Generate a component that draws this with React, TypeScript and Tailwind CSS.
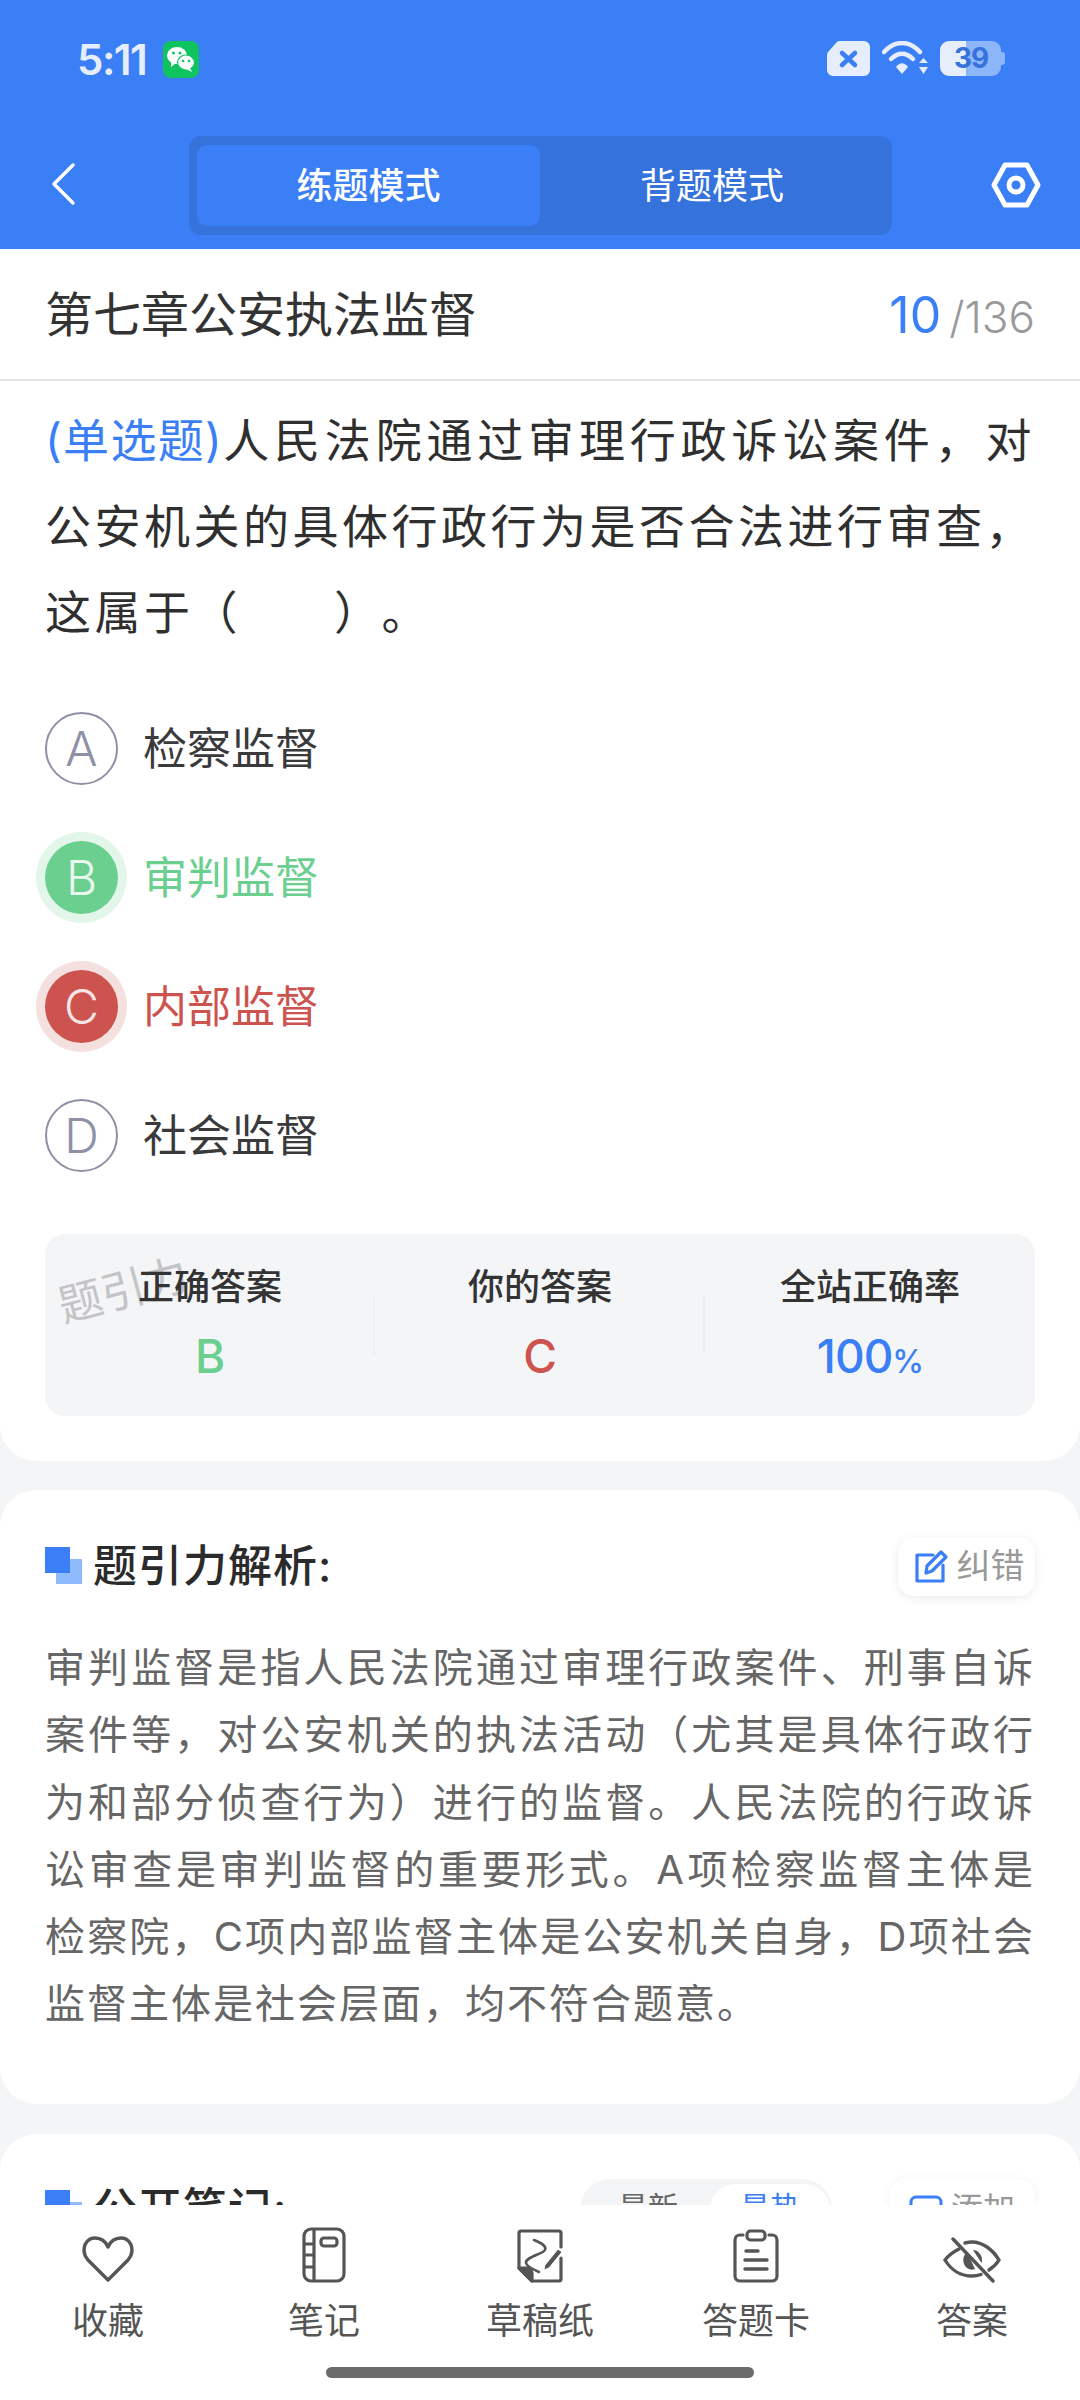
const opciones = [
  { letra: 'A', texto: '检察监督', estado: 'normal' },
  { letra: 'B', texto: '审判监督', estado: 'correcta' },
  { letra: 'C', texto: '内部监督', estado: 'erronea' },
  { letra: 'D', texto: '社会监督', estado: 'normal' },
];

function Opcion({ letra, texto, estado }: { letra: string; texto: string; estado: string }) {
  let circulo = 'border-2 border-[#8e90a6] text-[#8e90a6]';
  let color = 'text-[#3a3a3c]';
  if (estado === 'correcta') {
    circulo = 'bg-[#6bcf8f] text-[#e8f8ee] ring-[9px] ring-[#e2f6ea]';
    color = 'text-[#6bcf8f]';
  }
  if (estado === 'erronea') {
    circulo = 'bg-[#cd534f] text-[#f8e4e4] ring-[9px] ring-[#f5e0e0]';
    color = 'text-[#cd534f]';
  }
  return (
    <div className="flex h-[129px] items-center">
      <div className={`flex h-[73px] w-[73px] items-center justify-center rounded-full text-[48px] font-light ${circulo}`}>
        {letra}
      </div>
      <span className={`ml-[25px] text-[44px] leading-none ${color}`}>{texto}</span>
    </div>
  );
}

function Encabezado({ titulo }: { titulo: string }) {
  return (
    <div className="flex items-center">
      <div className="relative h-[38px] w-[37px]">
        <div className="absolute left-[11px] top-[12px] h-[25px] w-[26px] bg-[#8fbafb]" />
        <div className="absolute left-0 top-0 h-[26px] w-[25px] bg-[#3b7ff6]" />
      </div>
      <span className="ml-[11px] text-[44px] font-medium leading-none tracking-[1px] text-[#2b2b2b]">{titulo}</span>
    </div>
  );
}

function IconoCorazon() {
  return (
    <svg width="54" height="48" viewBox="0 0 54 48" fill="none" stroke="#555" strokeWidth="3.4" strokeLinejoin="round">
      <path d="M27 12 C24 5 18 3 14 3 C7 3 3 9 3 15 C3 19 4.500 22 7 25 L27 45 L47 25 C49.500 22 51 19 51 15 C51 9 47 3 40 3 C36 3 30 5 27 12 Z" />
    </svg>
  );
}

function IconoCuaderno() {
  return (
    <svg width="44" height="56" viewBox="0 0 44 56" fill="none" stroke="#555" strokeWidth="3.2">
      <rect x="2" y="2" width="40" height="52" rx="7" />
      <path d="M12 2 V54 M2 17 H12 M2 28 H12 M2 40 H12" />
      <rect x="19" y="11" width="16" height="8" rx="3" />
    </svg>
  );
}

function IconoBorrador() {
  return (
    <svg width="46" height="54" viewBox="0 0 46 54" fill="none" stroke="#555" strokeWidth="3.2" strokeLinejoin="round" strokeLinecap="round">
      <path d="M44 18 V4 a2 2 0 0 0 -2 -2 H4 a2 2 0 0 0 -2 2 V39 L15 52 H42 a2 2 0 0 0 2 -2 V29" />
      <path d="M2 39 H10 a5 5 0 0 1 5 5 V52 Z" fill="#555" />
      <path d="M17 11 C24 14 30 17 28 21 C26 25 8 28 9 34 C10 38 16 40 22 43" strokeWidth="2.6" />
      <path d="M28 36 L41 20 L45 23 L32 39 L27 41 Z" fill="#555" stroke="#fff" strokeWidth="1" />
    </svg>
  );
}

function IconoTarjeta() {
  return (
    <svg width="46" height="54" viewBox="0 0 46 54" fill="none" stroke="#555" strokeWidth="3.2" strokeLinecap="round">
      <path d="M10 6 H7 a5 5 0 0 0 -5 5 V47 a5 5 0 0 0 5 5 H39 a5 5 0 0 0 5 -5 V11 a5 5 0 0 0 -5 -5 H36" />
      <rect x="14" y="2" width="18" height="9" rx="3.500" />
      <path d="M13 22 H25 M12 31 H34 M12 40 H34" strokeWidth="3.400" />
    </svg>
  );
}

function IconoOjo() {
  return (
    <svg width="58" height="46" viewBox="0 0 58 46" fill="none" stroke="#555" strokeWidth="3.4" strokeLinecap="round">
      <path d="M16 12 C10 15 5 19 2 23 C8 33 18 39 29 39 C32 39 35 38.500 38 37.500" />
      <path d="M22 6 C24 5.500 27 5 29 5 C40 5 50 13 56 23 C53 28 49 31 46 33" />
      <path d="M24 15 C19 19 19 27 24 31 C27 33 29 33 32 32 Z" fill="#555" stroke="none" />
      <path d="M30 13 C35 13 39 18 39 23 C39 24 39 25 38.500 26 Z" fill="#555" stroke="none" />
      <path d="M10 2 L50 44" />
    </svg>
  );
}

const barra = [
  { etiqueta: '收藏', icono: <IconoCorazon /> },
  { etiqueta: '笔记', icono: <IconoCuaderno /> },
  { etiqueta: '草稿纸', icono: <IconoBorrador /> },
  { etiqueta: '答题卡', icono: <IconoTarjeta /> },
  { etiqueta: '答案', icono: <IconoOjo /> },
];

export default function App() {
  return (
    <div
      lang="zh-CN"
      className="flex h-[2400px] w-[1080px] flex-col overflow-hidden bg-[#f4f5f7] font-['Inter','Noto_Sans_CJK_SC',sans-serif]"
    >
      {/* Cabecera azul */}
      <header className="h-[249px] shrink-0 bg-[#3b7ff6]">
        <div className="flex h-[136px] items-start justify-between pl-[77px] pr-[75px] pt-[41px]">
          <div className="flex items-center">
            <span className="text-[42px] font-semibold leading-[37px] tracking-[-1.500px] text-[#e6edfd]">5:11</span>
            <svg className="ml-[17px]" width="36" height="37" viewBox="0 0 36 37">
              <rect width="36" height="37" rx="8" fill="#0fc45f" />
              <ellipse cx="14" cy="14.500" rx="10" ry="8.500" fill="#fff" />
              <path d="M8 20 L8 26 L13 22 Z" fill="#fff" />
              <ellipse cx="23" cy="21.500" rx="8.500" ry="7.500" fill="#fff" stroke="#0fc45f" strokeWidth="1.200" />
              <path d="M27 27 L29 31 L23 28 Z" fill="#fff" />
              <circle cx="10.500" cy="12" r="1.500" fill="#0fc45f" />
              <circle cx="17" cy="12" r="1.500" fill="#0fc45f" />
              <circle cx="20" cy="20" r="1.300" fill="#0fc45f" />
              <circle cx="26" cy="20" r="1.300" fill="#0fc45f" />
            </svg>
          </div>
          <div className="flex items-center">
            <svg width="43" height="35" viewBox="0 0 43 35">
              <path d="M12 0 H37 a6 6 0 0 1 6 6 V29 a6 6 0 0 1 -6 6 H6 a6 6 0 0 1 -6 -6 V14 a5 5 0 0 1 1.500 -3.500 L9 2 a5 5 0 0 1 3 -2 Z" fill="#e6edfd" />
              <path d="M15 12 L28 24 M28 12 L15 24" stroke="#3b7ff6" strokeWidth="4.500" strokeLinecap="round" />
            </svg>
            <svg className="ml-[12px]" width="47" height="35" viewBox="0 0 47 35" fill="none">
              <path d="M2 11 C13 -1 27 -1 38 11" stroke="#e6edfd" strokeWidth="4.500" strokeLinecap="round" />
              <path d="M9 18 C16 11 24 11 31 18" stroke="#e6edfd" strokeWidth="4.500" strokeLinecap="round" />
              <path d="M14 26 C18 21 22 21 26 26 L20 33 Z" fill="#e6edfd" />
              <path d="M37 22 L42 22 L46 22 L41.500 17 Z M37 26 L46 26 L41.500 33 Z" fill="#e6edfd" />
            </svg>
            <div className="relative ml-[11px] flex h-[35px] w-[65px] items-center">
              <div className="absolute left-0 top-0 h-[35px] w-[26px] rounded-l-[9px] bg-[#e6edfd]" />
              <div className="absolute left-[26px] top-0 h-[35px] w-[35px] rounded-r-[9px] bg-[#8db5fa]" />
              <div className="absolute right-0 top-[11px] h-[13px] w-[4px] rounded-r-[3px] bg-[#8db5fa]" />
              <span className="absolute left-[14px] top-0 text-[28px] font-bold leading-[35px] tracking-[-1px] text-[#3572dc]">39</span>
            </div>
          </div>
        </div>
        <div className="flex items-start pl-[50px] pr-[39px]">
          <svg className="mt-[26px]" width="26" height="44" viewBox="0 0 26 44" fill="none" stroke="#fff" strokeWidth="3.400" strokeLinecap="round" strokeLinejoin="round">
            <path d="M23 3 L4 22 L23 41" />
          </svg>
          <div className="ml-[113px] flex h-[99px] w-[703px] items-center rounded-[12px] bg-[#3572dc] px-[8px]">
            <div className="flex h-[81px] w-[343px] items-center justify-center rounded-[10px] bg-[#3b7ff6] text-[36px] font-medium text-white">
              练题模式
            </div>
            <div className="flex h-[81px] flex-1 items-center justify-center text-[36px] text-white">背题模式</div>
          </div>
          <svg className="ml-auto mt-[26px]" width="50" height="46" viewBox="0 0 50 46" fill="none" stroke="#fff" strokeWidth="5" strokeLinejoin="round">
            <path d="M14 3 H36 L47 23 L36 43 H14 L3 23 Z" />
            <circle cx="25" cy="23" r="7" />
          </svg>
        </div>
      </header>

      {/* Contenido */}
      <main className="min-h-0 flex-1 overflow-hidden">
        <section className="rounded-b-[36px] bg-white pb-[45px]">
          <div className="flex h-[132px] items-center justify-between border-b-2 border-[#e6e6e8] pl-[45px] pr-[45px] pt-[2px]">
            <h1 className="text-[48px] font-normal leading-none text-[#333]">第七章公安执法监督</h1>
            <div className="flex items-baseline">
              <span className="text-[50px] leading-none text-[#3b7ff6]">10</span>
              <span className="ml-[8px] text-[44px] font-light leading-none text-[#999]">/136</span>
            </div>
          </div>
          <div className="px-[45px]">
            <p className="pt-[16px] text-justify text-[46px] leading-[86px] tracking-[3.500px] text-[#2f2f2f] [text-spacing-trim:space-all]">
              <span className="tracking-normal text-[#3b7ff6]">(单选题)</span>人民法院通过审理行政诉讼案件，对公安机关的具体行政行为是否合法进行审查，这属<span className="tracking-[1.500px]">于（　　）</span>。
            </p>
            <div className="mt-[29px]">
              {opciones.map((o) => (
                <Opcion key={o.letra} letra={o.letra} texto={o.texto} estado={o.estado} />
              ))}
            </div>
            <div className="relative mt-[34px] grid h-[182px] grid-cols-3 rounded-[20px] bg-[#f4f5f7]">
              <span className="absolute left-[12px] top-[34px] -rotate-[15deg] text-[44px] leading-none text-[#c4c4c6]">
                题引力
              </span>
              <div className="relative flex flex-col items-center pt-[33px]">
                <span className="text-[36px] font-medium leading-[40px] text-[#333]">正确答案</span>
                <span className="mt-[26px] text-[46px] font-medium leading-[46px] text-[#6bcf8f]">B</span>
              </div>
              <div className="relative flex flex-col items-center pt-[33px]">
                <div className="absolute -left-[2px] top-[61px] h-[60px] w-[2px] bg-[#eeeff1]" />
                <span className="text-[36px] font-medium leading-[40px] text-[#333]">你的答案</span>
                <span className="mt-[26px] text-[46px] font-medium leading-[46px] text-[#cd534f]">C</span>
              </div>
              <div className="relative flex flex-col items-center pt-[33px]">
                <div className="absolute -left-[2px] top-[61px] h-[60px] w-[2px] bg-[#eeeff1]" />
                <span className="text-[36px] font-medium leading-[40px] text-[#333]">全站正确率</span>
                <span className="mt-[26px] text-[46px] font-medium leading-[46px] tracking-[-1px] text-[#3b7ff6]">
                  100<span className="text-[32px]">%</span>
                </span>
              </div>
            </div>
          </div>
        </section>

        <section className="mt-[29px] rounded-[36px] bg-white px-[45px] pb-[66px] pt-[46px]">
          <div className="flex h-[60px] items-center justify-between">
            <Encabezado titulo="题引力解析:" />
            <div className="flex h-[59px] w-[137px] items-center justify-center rounded-[16px] bg-white pl-[6px] shadow-[0_2px_10px_rgba(0,0,0,0.08)]">
              <svg width="34" height="34" viewBox="0 0 34 34" fill="none" stroke="#3b7ff6" strokeWidth="3.200" strokeLinecap="round" strokeLinejoin="round">
                <path d="M18 6 H2 V32 H28 V16" />
                <path d="M11 24 L12 17 L26 3 L31 8 L17 22 Z" />
              </svg>
              <span className="ml-[8px] text-[34px] leading-none text-[#999]">纠错</span>
            </div>
          </div>
          <p className="mt-[38px] text-justify text-[40px] leading-[67.300px] tracking-[2px] text-[#666]">
            审判监督是指人民法院通过审理行政案件、刑事自诉案件等，对公安机关的执法活动（尤其是具体行政行为和部分侦查行为）进行的监督。人民法院的行政诉讼审查是审判监督的重要形式。A项检察监督主体是检察院，C项内部监督主体是公安机关自身，D项社会监督主体是社会层面，均不符合题意。
          </p>
        </section>

        <section className="mt-[30px] rounded-t-[36px] bg-white px-[45px] pt-[45px]">
          <div className="flex h-[60px] items-center justify-between">
            <Encabezado titulo="公开笔记:" />
            <div className="flex items-center">
              <div className="flex h-[60px] w-[252px] items-start rounded-t-[30px] bg-[#f4f5f7] pl-[38px] pt-[5px]">
                <span className="mt-[8px] text-[30px] leading-none text-[#666]">最新</span>
                <span className="ml-[32px] flex h-[55px] w-[120px] justify-center rounded-t-[26px] bg-white pt-[8px] text-[30px] leading-none text-[#3b7ff6]">
                  最热
                </span>
              </div>
              <div className="ml-[57px] flex h-[60px] w-[146px] items-start justify-center rounded-t-[16px] bg-white pt-[14px] shadow-[0_0_8px_rgba(0,0,0,0.05)]">
                <svg className="mt-[2px]" width="34" height="34" viewBox="0 0 34 34" fill="none" stroke="#3b7ff6" strokeWidth="3">
                  <rect x="2" y="2" width="30" height="30" rx="5" />
                  <path d="M10 17 H24" />
                </svg>
                <span className="ml-[8px] text-[32px] leading-none text-[#999]">添加</span>
              </div>
            </div>
          </div>
        </section>
      </main>

      {/* Barra inferior */}
      <footer className="h-[195px] shrink-0 bg-white">
        <nav className="grid grid-cols-5">
          {barra.map((b) => (
            <div key={b.etiqueta} className="flex flex-col items-center">
              <div className="flex h-[78px] items-end justify-center">{b.icono}</div>
              <span className="mt-[18px] text-[36px] leading-[40px] text-[#555]">{b.etiqueta}</span>
            </div>
          ))}
        </nav>
        <div className="mx-auto mt-[26px] h-[11px] w-[428px] rounded-full bg-[#6b6b6b]" />
      </footer>
    </div>
  );
}
